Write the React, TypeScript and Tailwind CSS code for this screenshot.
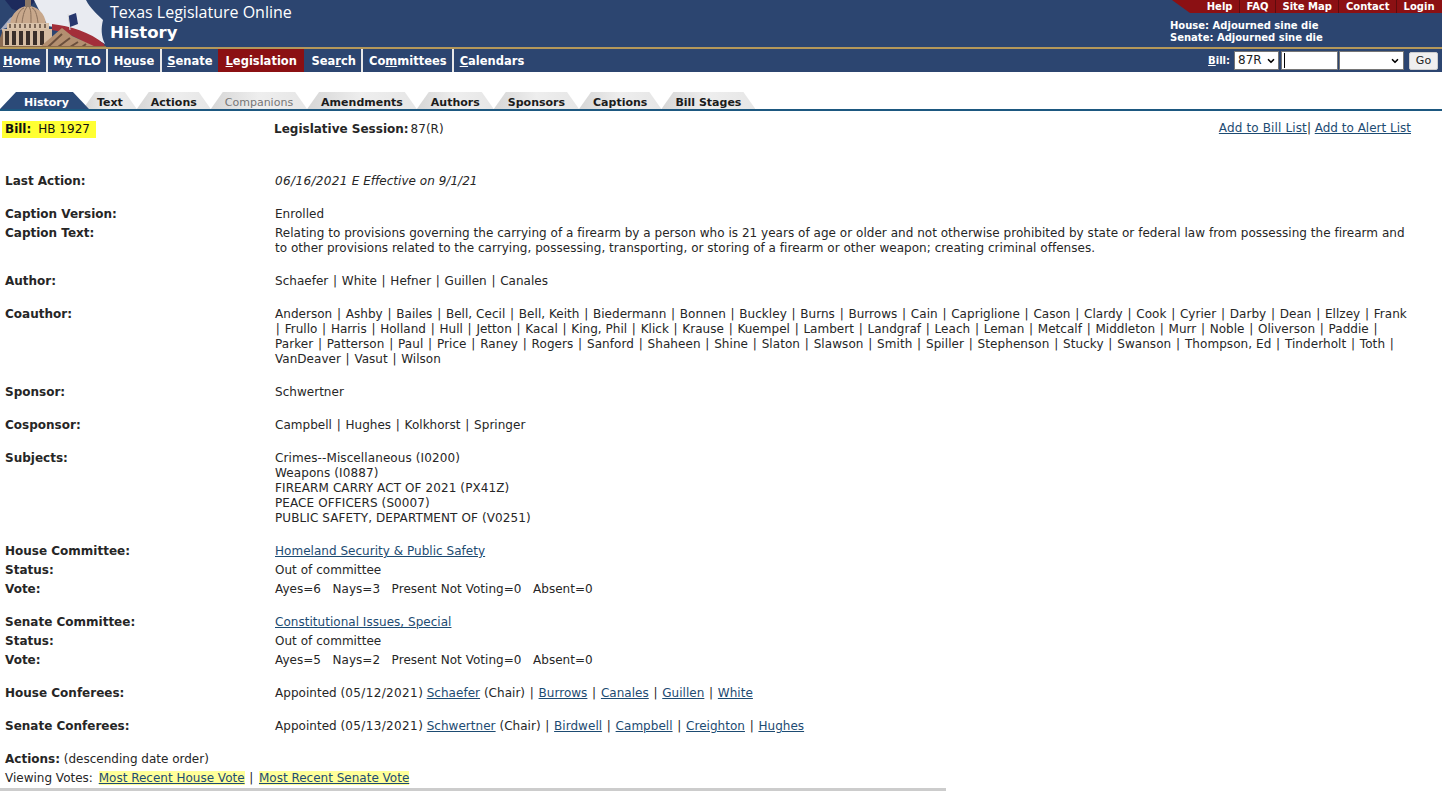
import React from "react";
import { ChevronDown } from "lucide-react";

const font = "[font-family:'DejaVu_Sans',Verdana,sans-serif]";

function Logo() {
  return (
    <svg width="106" height="47" viewBox="0 0 106 47" className="block shrink-0">
      <rect width="106" height="47" fill="#2c4570" />
      <path d="M5 0H36L24 13L12 9Z" fill="#1d2a5c" />
      <path d="M34 0H86C90 8 97 14 103 20C101 28 101 36 105 44C92 36 72 30 48 26L40 12Z" fill="#e9ebf1" />
      <path d="M52 24C70 26 90 32 104 44L105 47H90C80 38 66 32 52 30Z" fill="#a32f3a" />
      <path d="M0 30L10 18L20 12L12 26Z" fill="#a9adc0" />
      <path d="M68 16L76 13L78 24L70 27Z" fill="#27376e" />
      <path d="M68 14L70 30" stroke="#dddddd" strokeWidth="1" />
      <path d="M10 24C11 13 20 6 28 6C37 6 45 13 46 24Z" fill="#c8a88c" />
      <path d="M16 23C17 14 21 9 24 8M22 23C23 14 25 9 27 7M31 23C31 14 31 9 29 7M38 23C37 14 35 9 32 8" stroke="#8a6f5a" strokeWidth="1" fill="none" />
      <rect x="25" y="0" width="6" height="7" fill="#8d7866" />
      <rect x="7" y="23" width="42" height="6" fill="#d9c2aa" />
      <path d="M10 24V28M15 24V28M20 24V28M25 24V28M30 24V28M35 24V28M40 24V28M45 24V28" stroke="#5e4a3c" strokeWidth="1.5" />
      <rect x="2" y="29" width="50" height="18" fill="#d5bca2" />
      <path d="M7 31V45M14 31V45M21 31V45M28 31V45M35 31V45M42 31V45" stroke="#3a2f2a" strokeWidth="4" />
      <path d="M0 38L3 30V47H0Z" fill="#8c6c54" />
      <path d="M40 47L62 28L72 36L96 47Z" fill="#b38f70" />
      <path d="M48 47L62 34M58 47L70 38M70 47L78 42M82 47L86 44" stroke="#6b4f3c" strokeWidth="2" />
      <path d="M0 46.5H106" stroke="#8a6a4a" strokeWidth="1" />
    </svg>
  );
}

const topLinks = ["Help", "FAQ", "Site Map", "Contact", "Login"];

function Nav() {
  const items: [string, string, string, string][] = [
    ["", "H", "ome", "pl-[3px] pr-[5.5px] border-r-2 border-[#e8e8e8]"],
    ["M", "y", " TLO", "px-[5.5px] border-r-2 border-[#e8e8e8]"],
    ["H", "o", "use", "px-[5.5px] border-r-2 border-[#e8e8e8]"],
    ["", "S", "enate", "px-[5.5px]"],
    ["", "L", "egislation", "bg-[#8b1013] px-[7.5px]"],
    ["Sea", "r", "ch", "pl-[7px] pr-[5.5px] border-r-2 border-[#e8e8e8]"],
    ["Co", "m", "mittees", "px-[5.5px] border-r-2 border-[#e8e8e8]"],
    ["", "C", "alendars", "px-[5.5px]"],
  ];
  return (
    <div className="flex h-full items-stretch">
      {items.map(([a, u, b, cls], i) => (
        <div key={i} className={`flex h-[23px] items-center pt-[2px] text-[11.5px] font-bold text-white ${cls}`}>
          <span>
            {a}
            <span className="underline">{u}</span>
            {b}
          </span>
        </div>
      ))}
    </div>
  );
}

function Tabs() {
  const tabs = ["Text", "Actions", "Companions", "Amendments", "Authors", "Sponsors", "Captions", "Bill Stages"];
  return (
    <div className="mt-[20px] flex h-[17px] items-end text-[11px] leading-[13px]">
      <div className="relative z-10 -mr-[6px] flex h-[17px] items-end bg-[#2b4a78] pl-[24px] pr-[20px] font-bold text-white [clip-path:polygon(0_100%,16px_0,calc(100%-16px)_0,100%_100%)]">
        History
      </div>
      {tabs.map((t) => (
        <div
          key={t}
          className={`flex h-[17px] items-end bg-gradient-to-r from-[#d6d6d6] via-[#eeeeee] to-[#e6e6e6] px-[14px] [clip-path:polygon(0_100%,12px_0,calc(100%-12px)_0,100%_100%)] ${
            t === "Companions" ? "font-normal text-[#777777]" : "font-bold text-[#1c1c1c]"
          }`}
        >
          {t}
        </div>
      ))}
    </div>
  );
}

function A({ children }: { children: React.ReactNode }) {
  return <a className="text-[#1d4b72] underline">{children}</a>;
}

function P() {
  return <span className="px-[0.85px]">|</span>;
}

function Piped({ text }: { text: string }) {
  const parts = text.split(" | ");
  return (
    <>
      {parts.map((p, i) => (
        <React.Fragment key={i}>
          {p}
          {i < parts.length - 1 ? (
            <>
              {" "}
              <P />{" "}
            </>
          ) : null}
        </React.Fragment>
      ))}
    </>
  );
}

function D({ children }: { children: React.ReactNode }) {
  return <span className="tracking-[0.37px]">{children}</span>;
}

function Row({ label, children, gap = false }: { label?: string; children: React.ReactNode; gap?: boolean }) {
  return (
    <div className={`flex py-[2px] ${gap ? "mb-[14px]" : ""}`}>
      <div className="w-[270px] shrink-0 font-bold">{label}</div>
      <div className="grow tracking-[0.03px]">{children}</div>
    </div>
  );
}

export default function App() {
  return (
    <div className={`h-[791px] w-[1442px] overflow-hidden bg-white text-[12px] leading-[15px] text-[#262626] ${font}`}>
      <header className="flex h-[47px] justify-between bg-[#2c4570]">
        <div className="flex">
          <Logo />
          <div className="ml-[4px] pt-[3px] text-white">
            <div className="text-[16px] leading-[18px] [font-family:'Open_Sans',sans-serif]">Texas Legislature Online</div>
            <div className="mt-[2px] text-[16.5px] font-bold leading-[20px]">History</div>
          </div>
        </div>
        <div className="w-[270px]">
          <div className="flex h-[13px] justify-end bg-[#8b1013] pr-[1px] text-[10px] font-bold leading-[13px] text-white [clip-path:polygon(0_0,100%_0,100%_100%,18px_100%)]">
            {topLinks.map((l, i) => (
              <span key={l} className={`px-[6.5px] ${i < topLinks.length - 1 ? "border-r border-[#5e0b0d]" : ""}`}>
                {l}
              </span>
            ))}
          </div>
          <div className="ml-[-2px] mt-[7px] text-[10px] font-bold leading-[12px] text-white">
            <div>House: Adjourned sine die</div>
            <div>Senate: Adjourned sine die</div>
          </div>
        </div>
      </header>
      <div className="h-[2px] bg-[#b5985a]" />
      <nav className="flex h-[23px] items-center justify-between bg-[#2c4570]">
        <Nav />
        <div className="flex items-center pr-[4px] text-[10px] text-white">
          <span className="mr-[4px] font-bold">
            <span className="underline">B</span>ill:
          </span>
          <div className="relative">
            <select className="block h-[19px] w-[45px] appearance-none border border-[#767676] bg-white pl-[3px] text-[12px] text-[#222222]" defaultValue="87R">
              <option>87R</option>
            </select>
            <ChevronDown className="absolute right-[3px] top-[5px] h-[10px] w-[10px] text-black" strokeWidth={4} />
          </div>
          <div className="relative ml-[2px]">
            <input className="block h-[19px] w-[57px] border border-[#767676] bg-white" />
            <div className="absolute left-[3px] top-[2px] h-[15px] w-px bg-black" />
          </div>
          <div className="relative ml-px">
            <select className="block h-[19px] w-[65px] appearance-none border border-[#767676] bg-white text-[12px]">
              <option></option>
            </select>
            <ChevronDown className="absolute right-[4px] top-[5px] h-[10px] w-[10px] text-black" strokeWidth={4} />
          </div>
          <button className="ml-[5px] h-[18px] w-[29px] rounded-[2px] border border-[#cccccc] bg-[#efefef] text-[11px] leading-[14px] text-[#222222]">
            Go
          </button>
        </div>
      </nav>

      <Tabs />
      <div className="h-[2px] bg-[#1d5880]" />

      <main>
        <div className="flex h-[61px] items-start justify-between pt-[10px]">
          <div className="flex">
            <div className="ml-[2px] flex h-[17px] w-[94px] items-center bg-[#ffff33] pl-[3px] text-[#111111]">
              <b className="mr-[7px]">Bill:</b> HB 1927
            </div>
            <div className="ml-[178px] flex h-[17px] items-center">
              <b className="mr-[2px]">Legislative Session:</b> 87(R)
            </div>
          </div>
          <div className="mr-[31px]">
            <span className="tracking-[0.13px]">
              <A>Add to Bill List</A>
            </span>
            | <A>Add to Alert List</A>
          </div>
        </div>

        <div className="pl-[5px]">
          <Row label="Last Action:" gap>
            <i>
              <D>06/16/2021</D> E Effective on 9/1/21
            </i>
          </Row>
          <Row label="Caption Version:">Enrolled</Row>
          <Row label="Caption Text:" gap>
            Relating to provisions governing the carrying of a firearm by a person who is 21 years of age or older and not otherwise prohibited by state or federal law from possessing the firearm and
            <br />
            to other provisions related to the carrying, possessing, transporting, or storing of a firearm or other weapon; creating criminal offenses.
          </Row>
          <Row label="Author:" gap>
            <Piped text="Schaefer | White | Hefner | Guillen | Canales" />
          </Row>
          <Row label="Coauthor:" gap>
            <span className="tracking-[0.04px]">
              <Piped text="Anderson | Ashby | Bailes | Bell, Cecil | Bell, Keith | Biedermann | Bonnen | Buckley | Burns | Burrows | Cain | Capriglione | Cason | Clardy | Cook | Cyrier | Darby | Dean | Ellzey | Frank" />
            </span>
            <br />
            <P /> <Piped text="Frullo | Harris | Holland | Hull | Jetton | Kacal | King, Phil | Klick | Krause | Kuempel | Lambert | Landgraf | Leach | Leman | Metcalf | Middleton | Murr | Noble | Oliverson | Paddie" /> <P />
            <br />
            <span className="tracking-[0.07px]">
              <Piped text="Parker | Patterson | Paul | Price | Raney | Rogers | Sanford | Shaheen | Shine | Slaton | Slawson | Smith | Spiller | Stephenson | Stucky | Swanson | Thompson, Ed | Tinderholt | Toth" /> <P />
            </span>
            <br />
            <Piped text="VanDeaver | Vasut | Wilson" />
          </Row>
          <Row label="Sponsor:" gap>
            Schwertner
          </Row>
          <Row label="Cosponsor:" gap>
            <Piped text="Campbell | Hughes | Kolkhorst | Springer" />
          </Row>
          <Row label="Subjects:" gap>
            <span className="tracking-[0.1px]">
              Crimes--Miscellaneous (I0200)
              <br />
              Weapons (I0887)
              <br />
              FIREARM CARRY ACT OF 2021 (PX41Z)
              <br />
              PEACE OFFICERS (S0007)
              <br />
              PUBLIC SAFETY, DEPARTMENT OF (V0251)
            </span>
          </Row>
          <Row label="House Committee:">
            <A>Homeland Security &amp; Public Safety</A>
          </Row>
          <Row label="Status:">Out of committee</Row>
          <Row label="Vote:" gap>
            <span className="whitespace-pre">Ayes=6   Nays=3   Present Not Voting=0   Absent=0</span>
          </Row>
          <Row label="Senate Committee:">
            <A>Constitutional Issues, Special</A>
          </Row>
          <Row label="Status:">Out of committee</Row>
          <Row label="Vote:" gap>
            <span className="whitespace-pre">Ayes=5   Nays=2   Present Not Voting=0   Absent=0</span>
          </Row>
          <Row label="House Conferees:" gap>
            Appointed (<D>05/12/2021</D>) <A>Schaefer</A> (Chair) <P /> <A>Burrows</A> <P /> <A>Canales</A> <P /> <A>Guillen</A> <P /> <A>White</A>
          </Row>
          <Row label="Senate Conferees:" gap>
            Appointed (<D>05/13/2021</D>) <A>Schwertner</A> (Chair) <P /> <A>Birdwell</A> <P /> <A>Campbell</A> <P /> <A>Creighton</A> <P /> <A>Hughes</A>
          </Row>
          <div className="py-[2px]">
            <b>Actions:</b> (descending date order)
          </div>
          <div className="py-[2px]">
            <span className="mr-[2px]">Viewing Votes:</span> <span className="bg-[#ffff99]"><A>Most Recent House Vote</A></span> <P /> <span className="ml-[1px] bg-[#ffff99]"><A>Most Recent Senate Vote</A></span>
          </div>
        </div>
        <div className="h-[3px] w-[946px] bg-[#cccccc]" />
      </main>
    </div>
  );
}
